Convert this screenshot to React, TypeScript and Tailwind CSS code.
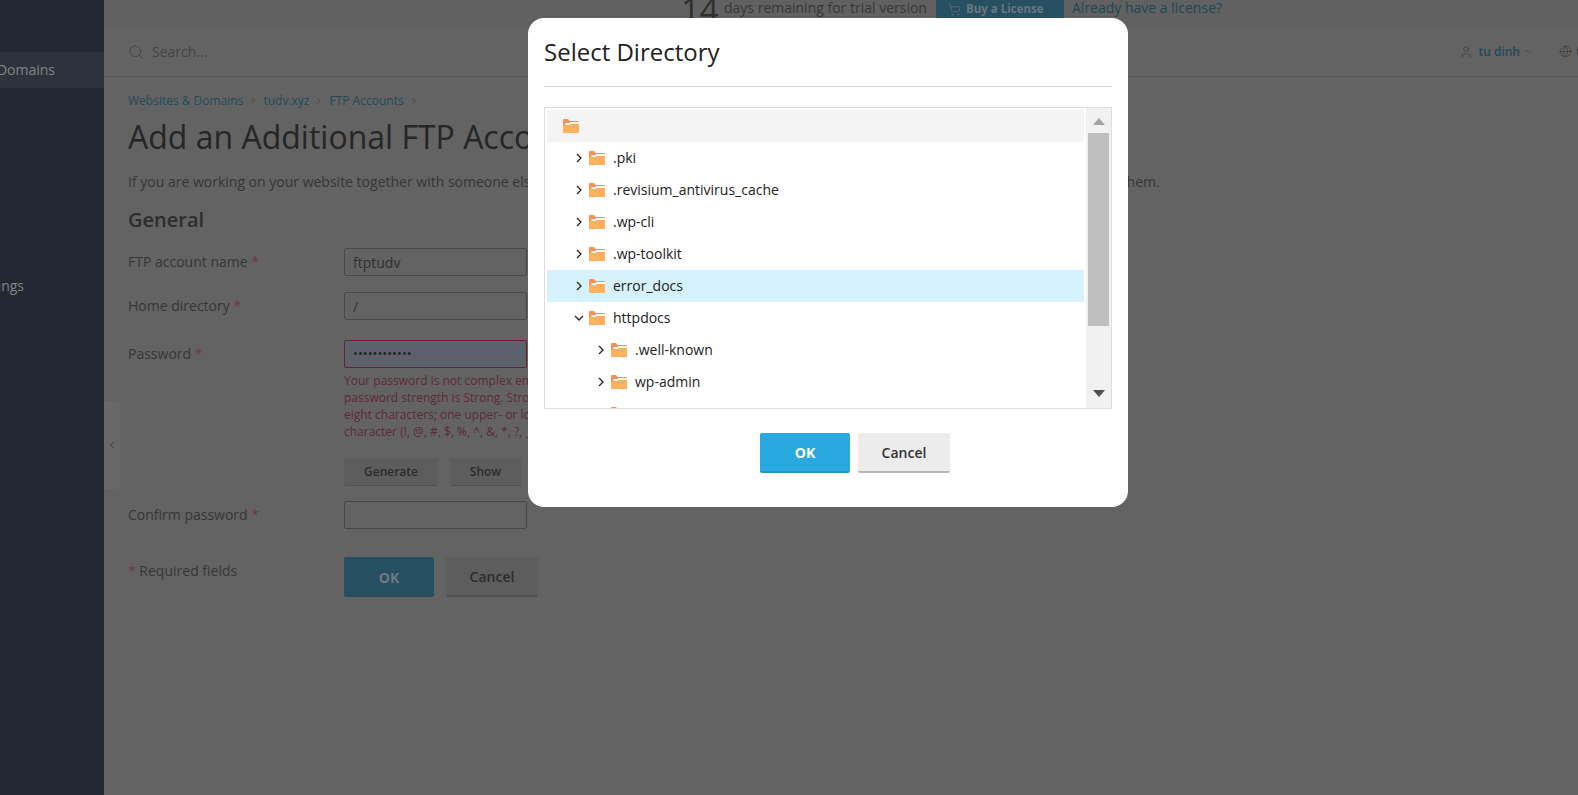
import { ChevronLeft, ChevronDown, ChevronRight, Search, ShoppingCart, User, Globe } from "lucide-react";

interface TreeRow {
  name: string
  depth: number
  open?: boolean
  root?: boolean
  selected?: boolean
}

const rows: TreeRow[] = [
  { name: "", depth: 0, root: true },
  { name: ".pki", depth: 1 },
  { name: ".revisium_antivirus_cache", depth: 1 },
  { name: ".wp-cli", depth: 1 },
  { name: ".wp-toolkit", depth: 1 },
  { name: "error_docs", depth: 1, selected: true },
  { name: "httpdocs", depth: 1, open: true },
  { name: ".well-known", depth: 2 },
  { name: "wp-admin", depth: 2 },
  { name: "wp-content", depth: 2 },
];

const Folder = () => (
  <svg width="16" height="14" viewBox="0 0 16 14" className="shrink-0">
    <path d="M0 1a1 1 0 0 1 1-1h4l1.500 2H15a1 1 0 0 1 1 1v4H0z" fill="#fb8e52" />
    <path d="M2.500 5V4h4l1-1H16v3H2.500z" fill="#ffffff" />
    <path d="M0 6h6.500l1-1H16v9H0z" fill="#ffb05e" />
  </svg>
);

const Arrow = ({ open }: { open?: boolean }) => (
  <svg width="10" height="10" viewBox="0 0 10 10" className="shrink-0">
    <path d={open ? "M1 3l4 4 4-4" : "M3 1l4 4-4 4"} fill="none" stroke="#222" strokeWidth="1.300" />
  </svg>
);

const Field = ({ label, value }: { label: string; value: string }) => (
  <div className="flex h-[28px] items-center">
    <div className="w-[216px] pb-[2px] text-[14px] text-[#363636]">
      {label} <span className="text-[#6b3a42]">*</span>
    </div>
    <div className="flex h-[28px] w-[183px] items-center rounded-[2px] border border-[#484848] px-[8px] text-[14px] text-[#303030]">
      {value}
    </div>
  </div>
);

const Page = () => (
  <div className="flex h-[795px] w-full overflow-hidden bg-[#636363]">
    <aside className="w-[104px] shrink-0 bg-[#242832] text-[14px] text-[#858585]">
      <div className="mt-[52px] flex h-[36px] items-center justify-end bg-[#2c333c] pb-[2px] pr-[49px]">Domains</div>
      <div className="mt-[187px] flex h-[20px] items-center justify-end pr-[80px]">ings</div>
    </aside>

    <main className="relative min-w-0 flex-1">
      <div className="absolute left-0 top-[401px] flex h-[88px] w-[16px] items-center justify-center rounded-r-[3px] bg-[#686868] text-[#2a2a2a]">
        <ChevronLeft size={12} strokeWidth={1.500} />
      </div>

      <div className="flex h-[27px] items-start bg-[#616161] pl-[577px]">
        <span className="-mt-[10px] w-[43px] text-[33px] leading-[40px] text-[#2f2f2f]">14</span>
        <span className="w-[212px] whitespace-nowrap text-[14px] leading-[16px] text-[#383838]">days remaining for trial version</span>
        <span className="flex h-[18px] w-[128px] items-center gap-[5px] bg-[#265061] pl-[12px] text-[11.500px] font-bold text-[#67777f]">
          <ShoppingCart size={13} strokeWidth={1.200} /> Buy a License
        </span>
        <span className="ml-[8px] whitespace-nowrap text-[14px] leading-[16px] text-[#1f4656]">Already have a license?</span>
      </div>

      <div className="flex h-[50px] items-center border-b border-[#565656] pl-[24px] pr-0">
        <Search size={16} strokeWidth={1} className="text-[#3c3c3c]" />
        <span className="ml-[8px] text-[14px] text-[#434343]">Search...</span>
        <div className="-mr-[4px] ml-auto flex items-center whitespace-nowrap">
          <User size={14} strokeWidth={1} className="text-[#333]" />
          <span className="ml-[5px] text-[12px] font-semibold text-[#234a5a]">tu dinh</span>
          <ChevronDown size={9} className="ml-[4px] text-[#444]" />
          <Globe size={13} strokeWidth={1} className="ml-[26px] text-[#333]" />
          <span className="ml-[4px] w-[6px] overflow-hidden text-[12px] font-semibold text-[#234a5a]">tu</span>
        </div>
      </div>

      <div className="pl-[24px]">
        <div className="mt-[16px] flex h-[16px] items-center gap-[5px] text-[12px] text-[#234a5a]">
          <span>Websites &amp; Domains</span>
          <ChevronRight size={10} strokeWidth={1.200} className="text-[#333]" />
          <span>tudv.xyz</span>
          <ChevronRight size={10} strokeWidth={1.200} className="text-[#333]" />
          <span>FTP Accounts</span>
          <ChevronRight size={10} strokeWidth={1.200} className="text-[#333]" />
        </div>
        <h1 className="mt-[6px] h-[44px] text-[32px] leading-[44px] text-[#262626]">Add an Additional FTP Account</h1>
        <p className="mt-[13px] h-[20px] whitespace-nowrap text-[14px] leading-[20px] text-[#363636]">
          If you are working on your website together with someone else or host websites for other users, you may also wish to create additional FTP accounts for them.
        </p>
        <h2 className="mt-[14px] h-[28px] text-[20px] font-semibold leading-[28px] text-[#2d2d2d]">General</h2>

        <div className="mt-[14px] flex flex-col gap-[16px]">
          <Field label="FTP account name" value="ftptudv" />
          <Field label="Home directory" value="/" />
        </div>

        <div className="mt-[20px] flex">
          <div className="w-[216px] pt-[3px] text-[14px] text-[#363636]">
            Password <span className="text-[#6b3a42]">*</span>
          </div>
          <div className="w-[183px]">
            <div className="flex h-[28px] items-center rounded-[2px] border border-[#6e2033] bg-[#5b626b] px-[8px] text-[13px] text-[#222]">
              ••••••••••••
            </div>
            <div className="mt-[4px] whitespace-nowrap text-[12px] leading-[17px] text-[#5e2a34]">
              <div>Your password is not complex enough.</div>
              <div>password strength is Strong. Strong</div>
              <div>eight characters; one upper- or lowercase</div>
              <div>character (!, @, #, $, %, ^, &amp;, *, ?, _, ~).</div>
            </div>
            <div className="mt-[18px] flex gap-[12px] text-[12px] font-semibold text-[#2c2c2c]">
              <span className="flex h-[28px] w-[94px] items-center justify-center rounded-[2px] border-b border-[#505050] bg-[#5d5d5d]">Generate</span>
              <span className="flex h-[28px] w-[71px] items-center justify-center rounded-[2px] border-b border-[#505050] bg-[#5d5d5d]">Show</span>
            </div>
          </div>
        </div>

        <div className="mt-[15px]">
          <Field label="Confirm password" value="" />
        </div>

        <div className="mt-[28px] flex">
          <div className="w-[216px] pt-[3px] text-[14px] text-[#363636]">
            <span className="text-[#6b3a42]">*</span> Required fields
          </div>
          <div className="flex gap-[12px] text-[14px] font-semibold">
            <span className="flex h-[40px] w-[90px] items-center justify-center rounded-[2px] bg-[#265061] font-bold text-[#6e7a80]">OK</span>
            <span className="flex h-[40px] w-[92px] items-center justify-center rounded-[2px] border-b-2 border-[#505050] bg-[#5d5d5d] text-[#2c2c2c]">Cancel</span>
          </div>
        </div>
      </div>
    </main>
  </div>
);

const Tree = () => (
  <div className="mt-[20px] flex h-[302px] border border-[#dddddd] pl-[2px]">
    <div className="min-w-0 flex-1 overflow-hidden pt-[2px]">
      {rows.map((row) => (
        <div
          key={row.name || "root"}
          className={`flex h-[32px] items-center text-[14px] text-[#222] ${row.root ? "bg-[#f4f4f4]" : row.selected ? "bg-[#d6f2ff]" : ""}`}
        >
          {row.depth === 2 && <span className="w-[22px] shrink-0" />}
          {row.root ? <span className="w-[16px] shrink-0" /> : <span className="ml-[28px] mr-[7px] flex w-[7px] justify-center"><Arrow open={row.open} /></span>}
          <Folder />
          <span className="ml-[8px] pb-[1px]">{row.name}</span>
        </div>
      ))}
    </div>
    <div className="ml-[2px] flex w-[25px] shrink-0 flex-col items-center bg-[#f1f1f1]">
      <svg width="12" height="7" viewBox="0 0 12 7" className="mt-[10px]"><path d="M6 0l6 7H0z" fill="#a3a3a3" /></svg>
      <div className="mt-[8px] h-[193px] w-[21px] bg-[#bfbfbf]" />
      <svg width="12" height="7" viewBox="0 0 12 7" className="mt-[64px]"><path d="M0 0h12L6 7z" fill="#505050" /></svg>
    </div>
  </div>
);

const App = () => (
  <div className="relative h-[795px] w-full overflow-hidden font-['Open_Sans',sans-serif]">
    <Page />
    <div className="absolute left-[528px] top-[18px] h-[489px] w-[600px] rounded-[16px] bg-white px-[16px] pt-[16px]">
      <h3 className="h-[36px] text-[24px] leading-[36px] text-[#222]">Select Directory</h3>
      <div className="mt-[16px] h-[1px] bg-[#d8d8e0]" />
      <Tree />
      <div className="mt-[24px] flex gap-[8px] pl-[216px] text-[14px]">
        <button className="h-[40px] w-[90px] rounded-[2px] border-b-2 border-[#2196c9] bg-[#28aae1] font-bold text-white">OK</button>
        <button className="h-[40px] w-[92px] rounded-[2px] border-b-2 border-[#b5b5b5] bg-[#ececec] font-semibold text-[#333]">Cancel</button>
      </div>
    </div>
  </div>
);

export default App;
